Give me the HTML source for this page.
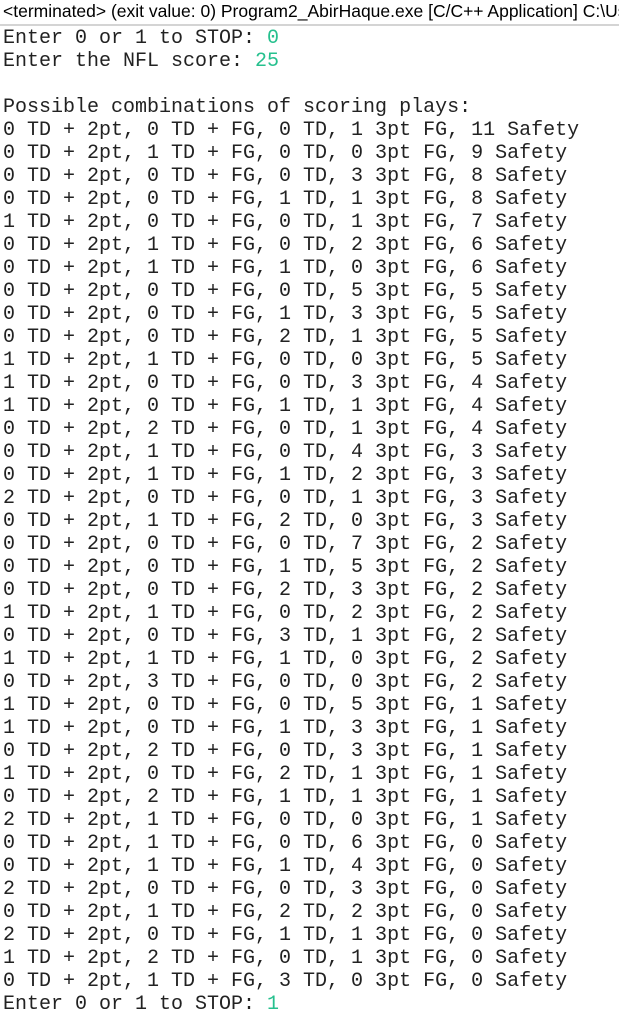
<!DOCTYPE html>
<html><head><style>
body{margin:0;background:#fff;width:619px;height:1035px;overflow:hidden;}
.h{height:24px;border-bottom:2px solid #d4d4d4;font:17.5px "Liberation Sans",sans-serif;color:#000;padding-left:3px;line-height:22px;white-space:nowrap;overflow:hidden;}
pre{margin:0;padding:1px 0 0 3px;font:20px "Liberation Mono",monospace;line-height:23px;color:#222;}
.g{color:#26c08e;}
</style></head><body>
<div class="h">&lt;terminated&gt; (exit value: 0) Program2_AbirHaque.exe [C/C++ Application] C:\Users</div>
<pre>Enter 0 or 1 to STOP: <span class="g">0</span>
Enter the NFL score: <span class="g">25</span>

Possible combinations of scoring plays:
0 TD + 2pt, 0 TD + FG, 0 TD, 1 3pt FG, 11 Safety
0 TD + 2pt, 1 TD + FG, 0 TD, 0 3pt FG, 9 Safety
0 TD + 2pt, 0 TD + FG, 0 TD, 3 3pt FG, 8 Safety
0 TD + 2pt, 0 TD + FG, 1 TD, 1 3pt FG, 8 Safety
1 TD + 2pt, 0 TD + FG, 0 TD, 1 3pt FG, 7 Safety
0 TD + 2pt, 1 TD + FG, 0 TD, 2 3pt FG, 6 Safety
0 TD + 2pt, 1 TD + FG, 1 TD, 0 3pt FG, 6 Safety
0 TD + 2pt, 0 TD + FG, 0 TD, 5 3pt FG, 5 Safety
0 TD + 2pt, 0 TD + FG, 1 TD, 3 3pt FG, 5 Safety
0 TD + 2pt, 0 TD + FG, 2 TD, 1 3pt FG, 5 Safety
1 TD + 2pt, 1 TD + FG, 0 TD, 0 3pt FG, 5 Safety
1 TD + 2pt, 0 TD + FG, 0 TD, 3 3pt FG, 4 Safety
1 TD + 2pt, 0 TD + FG, 1 TD, 1 3pt FG, 4 Safety
0 TD + 2pt, 2 TD + FG, 0 TD, 1 3pt FG, 4 Safety
0 TD + 2pt, 1 TD + FG, 0 TD, 4 3pt FG, 3 Safety
0 TD + 2pt, 1 TD + FG, 1 TD, 2 3pt FG, 3 Safety
2 TD + 2pt, 0 TD + FG, 0 TD, 1 3pt FG, 3 Safety
0 TD + 2pt, 1 TD + FG, 2 TD, 0 3pt FG, 3 Safety
0 TD + 2pt, 0 TD + FG, 0 TD, 7 3pt FG, 2 Safety
0 TD + 2pt, 0 TD + FG, 1 TD, 5 3pt FG, 2 Safety
0 TD + 2pt, 0 TD + FG, 2 TD, 3 3pt FG, 2 Safety
1 TD + 2pt, 1 TD + FG, 0 TD, 2 3pt FG, 2 Safety
0 TD + 2pt, 0 TD + FG, 3 TD, 1 3pt FG, 2 Safety
1 TD + 2pt, 1 TD + FG, 1 TD, 0 3pt FG, 2 Safety
0 TD + 2pt, 3 TD + FG, 0 TD, 0 3pt FG, 2 Safety
1 TD + 2pt, 0 TD + FG, 0 TD, 5 3pt FG, 1 Safety
1 TD + 2pt, 0 TD + FG, 1 TD, 3 3pt FG, 1 Safety
0 TD + 2pt, 2 TD + FG, 0 TD, 3 3pt FG, 1 Safety
1 TD + 2pt, 0 TD + FG, 2 TD, 1 3pt FG, 1 Safety
0 TD + 2pt, 2 TD + FG, 1 TD, 1 3pt FG, 1 Safety
2 TD + 2pt, 1 TD + FG, 0 TD, 0 3pt FG, 1 Safety
0 TD + 2pt, 1 TD + FG, 0 TD, 6 3pt FG, 0 Safety
0 TD + 2pt, 1 TD + FG, 1 TD, 4 3pt FG, 0 Safety
2 TD + 2pt, 0 TD + FG, 0 TD, 3 3pt FG, 0 Safety
0 TD + 2pt, 1 TD + FG, 2 TD, 2 3pt FG, 0 Safety
2 TD + 2pt, 0 TD + FG, 1 TD, 1 3pt FG, 0 Safety
1 TD + 2pt, 2 TD + FG, 0 TD, 1 3pt FG, 0 Safety
0 TD + 2pt, 1 TD + FG, 3 TD, 0 3pt FG, 0 Safety
Enter 0 or 1 to STOP: <span class="g">1</span></pre>
</body></html>
